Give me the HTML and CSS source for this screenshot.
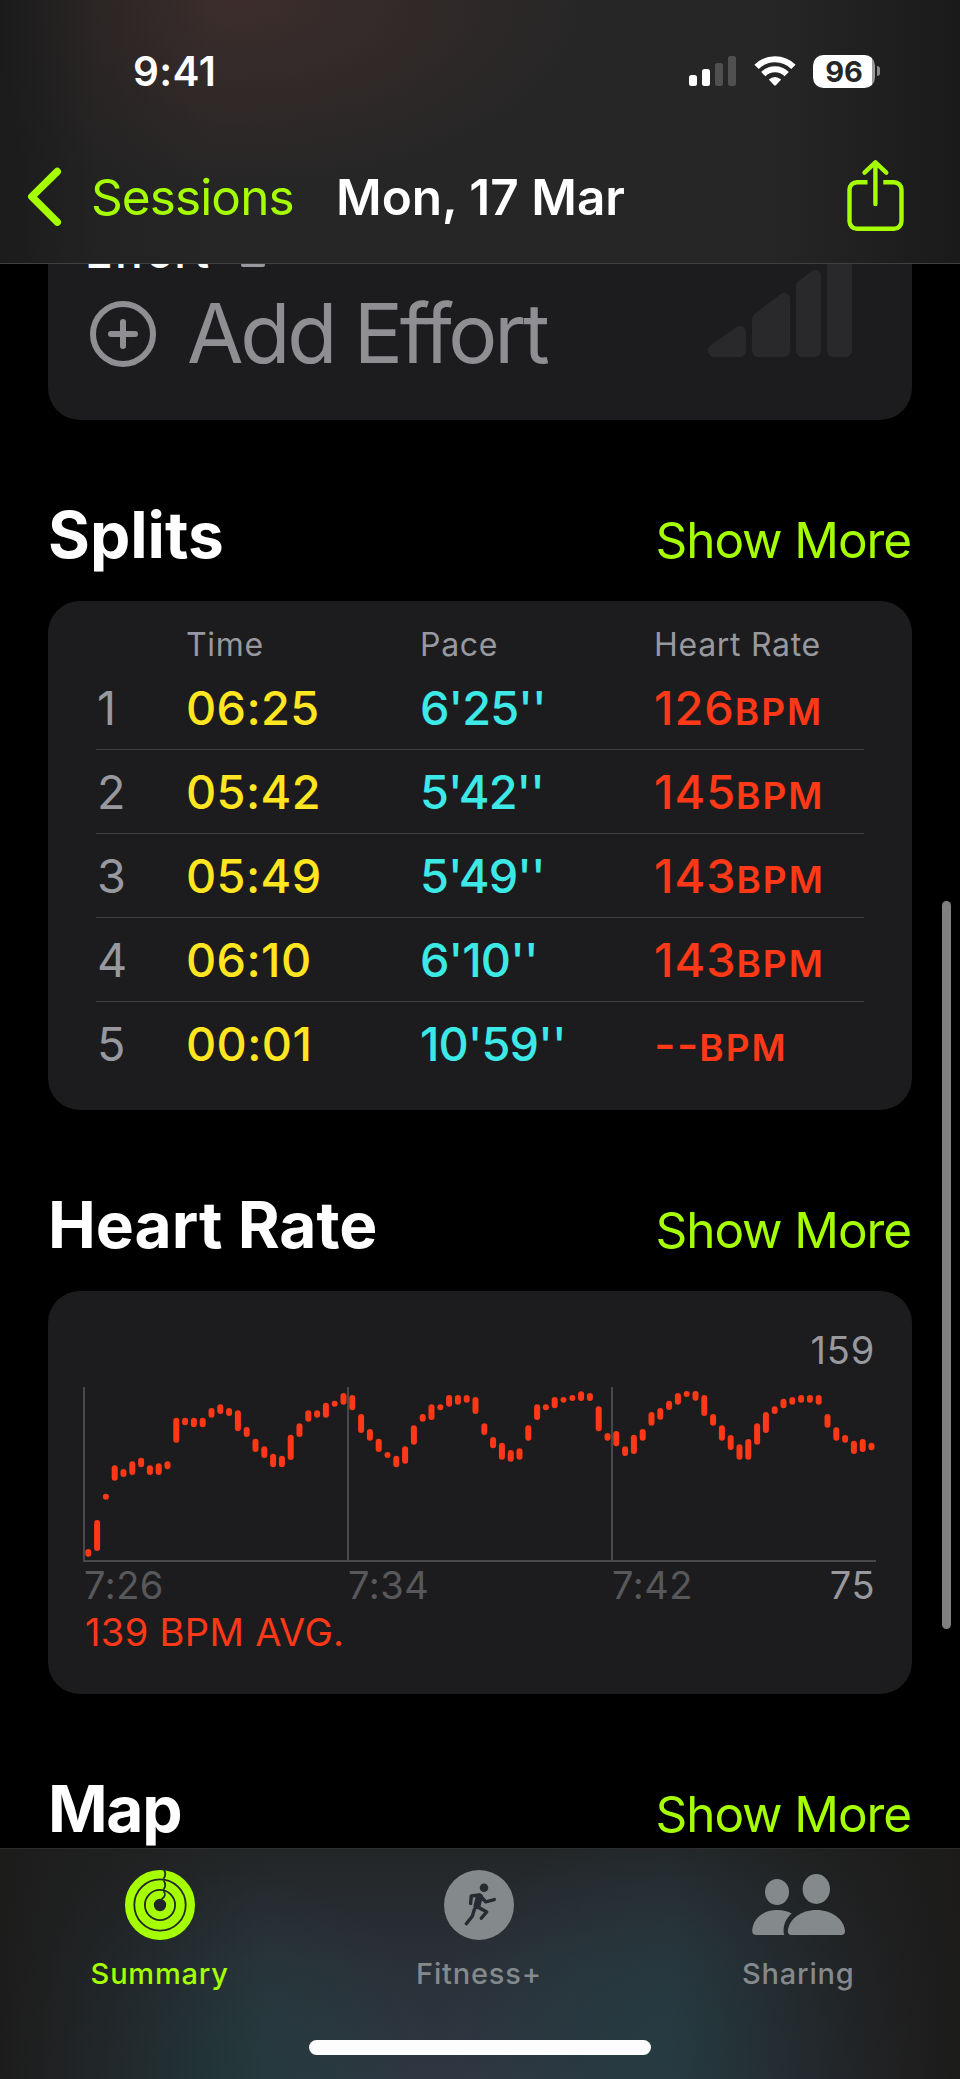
FILE: index.html
```html
<!DOCTYPE html>
<html lang="en">
<head>
	<meta charset="UTF-8">
	<title>Mon, 17 Mar</title>
	<link rel="stylesheet" href="styles.css">
</head>
<body>
	<div id="phone">
		<header id="top">
			<div class="status">
				<span class="clock">9:41</span>
				<div class="status-icons">
					<svg class="signal" width="47" height="30" viewBox="0 0 47 30">
						<rect x="0" y="19" width="8" height="11" rx="2.5" fill="#fff"/>
						<rect x="13" y="13" width="8" height="17" rx="2.5" fill="#fff"/>
						<rect x="26" y="7" width="8" height="23" rx="2.5" fill="#505050"/>
						<rect x="39" y="0" width="8" height="30" rx="2.5" fill="#505050"/>
					</svg>
					<svg class="wifi" width="42" height="30" viewBox="0 0 42 30">
						<path d="M2.6 10.9A26 26 0 0 1 39.4 10.9" fill="none" stroke="#fff" stroke-width="6.2"/>
						<path d="M9.3 18.2A16.5 16.5 0 0 1 32.7 18.2" fill="none" stroke="#fff" stroke-width="6"/>
						<path d="M14.8 23.4Q21 18.4 27.2 23.4L21.9 29.2Q21 30 20.1 29.2Z" fill="#fff"/>
					</svg>
					<div class="battery"><span>96</span></div>
					<i class="nub"></i>
				</div>
			</div>
			<nav class="nav">
				<a href="javascript:;" class="back">
					<svg width="34" height="60" viewBox="0 0 34 60"><path d="M29.3 4.5L3.8 29.7L29.3 55.1" fill="none" stroke="#a6ff00" stroke-width="7.4" stroke-linecap="round" stroke-linejoin="round"/></svg>
					<span>Sessions</span>
				</a>
				<h1>Mon, 17 Mar</h1>
				<a href="javascript:;" class="share">
					<svg width="58" height="72" viewBox="0 0 58 72" fill="none" stroke="#a6ff00" stroke-width="4.4">
						<path d="M20.5 21.2H10A7.5 7.5 0 0 0 2.5 28.7V60.3A7.5 7.5 0 0 0 10 67.8H47A7.5 7.5 0 0 0 54.5 60.3V28.7A7.5 7.5 0 0 0 47 21.2H36.3"/>
						<path d="M28.4 2V43M17.5 11.7L28.4 1.4L39.3 11.7" stroke-linecap="round" stroke-linejoin="round"/>
					</svg>
				</a>
			</nav>
		</header>

		<main>
			<section class="card effort">
				<div class="effort-label"><span>Effort</span><i></i></div>
				<div class="effort-add">
					<svg width="66" height="66" viewBox="0 0 66 66" fill="none" stroke="#8e8e93" stroke-width="6">
						<circle cx="33" cy="33" r="30"/>
						<path d="M33 21V45M21 33H45" stroke-linecap="round"/>
					</svg>
					<span>Add Effort</span>
				</div>
				<svg class="effort-bars" width="144" height="130" viewBox="0 0 144 130" fill="#29292b" stroke="#29292b" stroke-width="12" stroke-linejoin="round">
					<path d="M6 124V123.5L32 105V124Z"/>
					<path d="M50 124V92L76 72V124Z"/>
					<path d="M94 124V59L107 49V124Z"/>
					<path d="M125 124V20H138V124Z"/>
				</svg>
			</section>

			<div class="head"><h2>Splits</h2><a href="javascript:;">Show More</a></div>
			<section class="card splits">
				<div class="row th"><span></span><span>Time</span><span>Pace</span><span>Heart Rate</span></div>
				<div class="row"><span class="n">1</span><span class="time">06:25</span><span class="pace">6'25''</span><span class="hr">126<small>BPM</small></span></div>
				<div class="row"><span class="n">2</span><span class="time">05:42</span><span class="pace">5'42''</span><span class="hr">145<small>BPM</small></span></div>
				<div class="row"><span class="n">3</span><span class="time">05:49</span><span class="pace">5'49''</span><span class="hr">143<small>BPM</small></span></div>
				<div class="row"><span class="n">4</span><span class="time">06:10</span><span class="pace">6'10''</span><span class="hr">143<small>BPM</small></span></div>
				<div class="row"><span class="n">5</span><span class="time">00:01</span><span class="pace">10'59''</span><span class="hr">--<small>BPM</small></span></div>
			</section>

			<div class="head"><h2>Heart Rate</h2><a href="javascript:;">Show More</a></div>
			<section class="card heart">
				<div class="max">159</div>
				<svg id="chart" width="794" height="176" viewBox="0 0 794 176">
					<path d="M1 0V174M265 0V174M529 0V174M0 174H793" fill="none" stroke="#48484a" stroke-width="2"/>
				</svg>
				<div class="axis"><span>7:26</span><span>7:34</span><span>7:42</span><span class="min">75</span></div>
				<div class="avg">139 BPM AVG.</div>
			</section>

			<div class="head map"><h2>Map</h2><a href="javascript:;">Show More</a></div>
		</main>

		<footer id="tabs">
			<ul>
				<li class="active">
					<svg width="70" height="70" viewBox="0 0 70 70" fill="none">
						<g stroke="#a6ff00">
							<circle cx="35" cy="35" r="30.8" stroke-width="8.4"/>
							<circle cx="35" cy="35" r="20.4" stroke-width="8.8"/>
							<circle cx="35" cy="35" r="10.2" stroke-width="8"/>
						</g>
						<path d="M38.8 -.5Q42 4.5 38.4 9M38.6 10.5Q42 15 38.4 19.5M38.6 21Q42 26 36.6 29" stroke="#252c2f" stroke-width="1.8"/>
					</svg>
					<span>Summary</span>
				</li>
				<li>
					<svg width="70" height="70" viewBox="0 0 70 70">
						<circle cx="35" cy="35" r="35" fill="#84898c"/>
						<circle cx="40" cy="17.7" r="4.3" fill="#252c31"/>
						<g fill="none" stroke="#252c31" stroke-linecap="round" stroke-linejoin="round" stroke-width="3.4">
							<path d="M26.6 33.5L27.3 26L35 25"/>
							<path d="M36.5 26L41.7 31.8L50.3 29.6"/>
							<path d="M34 37L42.7 42L37.3 48.2"/>
							<path d="M30.3 39.5L28.3 46.2L22.3 53.7"/>
							<path d="M35.3 27L33 35.8" stroke-width="7"/>
						</g>
					</svg>
					<span>Fitness+</span>
				</li>
				<li>
					<svg class="people" width="94" height="70" viewBox="0 0 94 70" fill="#84898c">
						<ellipse cx="25" cy="22" rx="12" ry="13"/>
						<ellipse cx="64.3" cy="19" rx="13.7" ry="15"/>
						<path d="M39.7 43.5C33 49 30.5 57 32 65H4.5Q.2 65 .2 61C.8 48 12 40 25 40C31 40 36 41.2 39.7 43.5Z"/>
						<path d="M39.5 65Q35.8 65 35.8 61C37 49 49 40 64.3 40S92 49 93 61Q93 65 89.3 65Z"/>
					</svg>
					<span>Sharing</span>
				</li>
			</ul>
			<div class="home"></div>
		</footer>

		<div id="scrollbar"></div>
	</div>
	<script>
		window.onload = function(){
			// top and bottom of every bar, in thirds of a pixel
			var bars = [
				[486,509],[399,492],[320,338],[235,281],[246,270],[223,264],[212,241],[235,264],[229,264],[223,247],
				[92,167],[92,115],[92,121],[92,121],[63,92],[52,81],[63,87],[70,133],[120,150],[155,195],
				[178,213],[200,241],[206,241],[143,219],[109,150],[70,104],[70,92],[47,92],[41,59],[18,53],
				[24,70],[81,138],[126,161],[155,195],[195,213],[206,241],[178,230],[115,173],[81,104],[52,99],
				[52,70],[24,59],[24,53],[24,47],[30,81],[109,144],[150,184],[167,218],[189,224],[184,218],
				[115,161],[52,99],[52,70],[30,64],[30,47],[24,42],[13,42],[18,42],[58,133],[138,161],
				[132,178],[178,207],[143,201],[126,161],[75,116],[63,98],[41,69],[18,53],[12,30],[12,41],
				[24,87],[81,116],[115,161],[144,189],[172,218],[156,218],[109,173],[75,138],[58,81],[35,64],
				[30,53],[24,47],[24,47],[24,53],[81,122],[121,161],[144,167],[161,201],[156,195],[167,190]
			];
			var chart = document.getElementById('chart');
			for(var i=0;i<bars.length;i++){
				var r = document.createElementNS('http://www.w3.org/2000/svg','rect');
				r.setAttribute('x', 2.3 + i * 8.8);
				r.setAttribute('y', bars[i][0] / 3);
				r.setAttribute('width', 6);
				r.setAttribute('height', (bars[i][1] - bars[i][0]) / 3);
				r.setAttribute('rx', 3);
				r.setAttribute('fill', '#ff3818');
				chart.appendChild(r);
			}
		}
	</script>
</body>
</html>
```
FILE: styles.css
```css
*{padding: 0;margin: 0;box-sizing: border-box;}
ul{list-style: none;}
a{color: #a6ff00;text-decoration: none;}
svg{display: block;overflow: visible;flex: none;}
body{background: #000;font-family: Inter,"Liberation Sans",sans-serif;color: #fff;font-kerning: normal;}
#phone{width: 960px;height: 2079px;position: relative;overflow: hidden;display: flex;flex-direction: column;}

#top{height: 264px;flex: none;position: relative;z-index: 2;border-bottom: 1px solid #404041;background: linear-gradient(90deg,#1b1b1b,rgba(27,27,27,.3) 10%,rgba(27,27,27,0) 22%,rgba(27,27,27,0) 80%,#1a1a1a),radial-gradient(360px 190px at 240px 0,#3c2d2c,rgba(60,45,44,.5) 50%,rgba(60,45,44,0)),#262626;}
.status{height: 142px;padding: 0 80px 0 133px;display: flex;align-items: center;justify-content: space-between;}
.clock{font-size: 40.5px;font-weight: 600;line-height: 60px;letter-spacing: .4px;padding-top: 2px;}
.status-icons{display: flex;align-items: center;}
.signal{margin-right: 18px;}
.wifi{margin-right: 17px;}
.battery{width: 62px;height: 33px;border-radius: 10.5px;background: linear-gradient(90deg,#fff 59px,#9a9a9a 59px);color: #262626;font-size: 29px;font-weight: 700;line-height: 33px;text-align: center;}
.nub{width: 3px;height: 10px;margin-left: 2px;border-radius: 0 4px 4px 0;background: #8a8a8a;}
.nav{height: 110px;padding-left: 28px;display: flex;align-items: center;font-size: 49.5px;line-height: 60px;}
.back{display: flex;align-items: center;width: 308px;}
.back span{margin-left: 29px;letter-spacing: -.9px;}
.nav h1{font-size: 49.5px;font-weight: 600;}
.share{margin-left: auto;margin-right: 55px;}

main{flex: 1;min-height: 0;overflow: hidden;}
.card{margin: 0 48px;background: #1c1c1e;border-radius: 32px;}
.effort{height: 200px;margin-top: -44px;padding: 8px 37px 0;position: relative;}
.effort-label{height: 61px;display: flex;font-size: 46px;font-weight: 500;line-height: 46px;letter-spacing: .5px;}
.effort-label i{width: 24px;height: 4px;margin: 35px 0 0 31px;border-radius: 2px;background: #98989f;}
.effort-add{display: flex;align-items: center;height: 90px;padding-left: 5px;font-size: 82px;line-height: 90px;letter-spacing: -3.3px;color: #8e8e93;}
.effort-add span{margin-left: 31px;}
.effort-bars{position: absolute;right: 60px;bottom: 63px;}

.head{height: 181px;padding: 83px 49px 0 48px;display: flex;justify-content: space-between;align-items: baseline;}
.head h2{font-size: 64px;line-height: 64px;font-weight: 700;}
.head.map h2{letter-spacing: -1.3px;}
.head a{font-size: 49.5px;line-height: 60px;letter-spacing: -1.1px;}

.splits{height: 509px;padding: 24px 48px 0;}
.row{height: 84px;display: grid;grid-template-columns: 90px 234px 234px 1fr;border-bottom: 1px solid #3d3d40;font-size: 46.8px;line-height: 84px;font-weight: 500;white-space: nowrap;}
.row:last-child{border: 0;}
.th{height: 41px;border: 0;font-size: 32px;line-height: 40px;font-weight: 400;letter-spacing: .7px;color: #98989f;}
.n{color: #98989f;font-weight: 400;padding-left: 1px;}
.time{color: #ffe620;letter-spacing: .4px;}
.pace{color: #3ce9e6;letter-spacing: -.9px;}
.hr{color: #ff3818;letter-spacing: 1px;}
.hr small{font-size: 37px;font-weight: 600;letter-spacing: 2px;}

.heart{height: 403px;padding: 39px 35px 0;font-size: 38px;line-height: 40px;}
.max{height: 57px;padding-right: 2px;text-align: right;letter-spacing: .8px;color: #98989f;}
.axis{height: 49px;padding-top: 2px;display: grid;grid-template-columns: 264px 264px 1fr auto;letter-spacing: .5px;color: #58585b;}
.axis span{padding-left: 1px;}
.axis .min{color: #98989f;padding-right: 2px;}
.avg{color: #ff3818;padding-left: 2px;letter-spacing: .35px;}

#tabs{height: 231px;flex: none;border-top: 1px solid #2c2d2e;background: linear-gradient(90deg,#1c1c1b,rgba(28,28,27,.7) 8%,rgba(28,28,27,0) 28%,rgba(28,28,27,0) 70%,rgba(28,27,26,.7) 90%,#1c1b1a),radial-gradient(230px 210px at 215px 231px,#233b3e,rgba(35,59,62,0)),radial-gradient(250px 230px at 680px 200px,#253b41,rgba(37,59,65,0)),linear-gradient(#232627,#2a3038 50%,#303642);}
#tabs ul{display: flex;height: 191px;padding-right: 2px;}
#tabs li{flex: 1;padding-top: 21px;display: flex;flex-direction: column;align-items: center;color: #84898c;}
#tabs li span{margin-top: 15px;font-size: 29px;line-height: 38px;font-weight: 500;letter-spacing: .8px;}
#tabs .people{margin-left: 2px;}
#tabs .active{color: #a6ff00;}
.home{width: 342px;height: 15px;margin: 0 auto;border-radius: 8px;background: #fdfdfd;}
#scrollbar{position: absolute;left: 942px;top: 901px;width: 9px;height: 728px;border-radius: 5px;background: #808080;}
```
